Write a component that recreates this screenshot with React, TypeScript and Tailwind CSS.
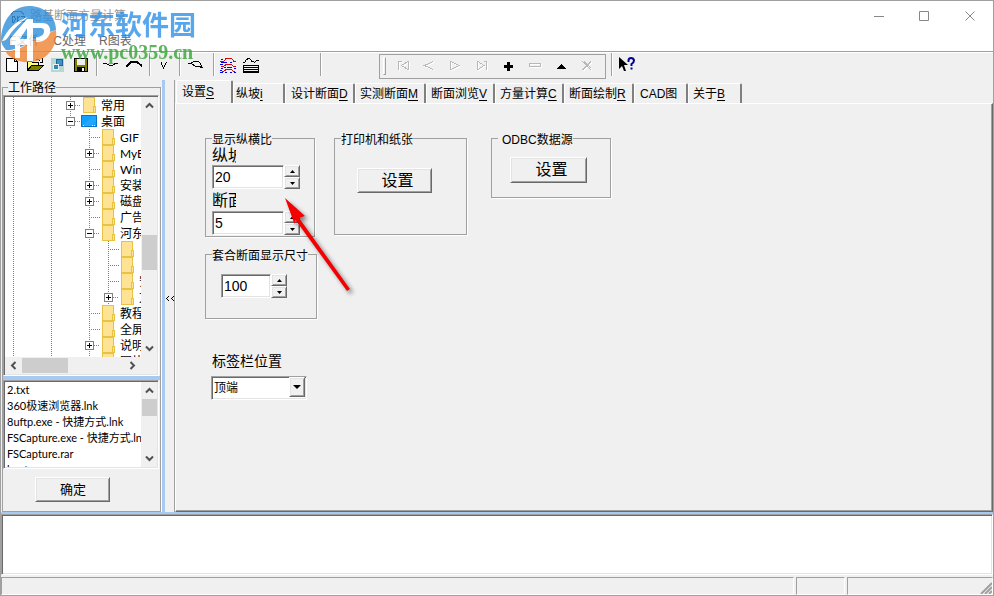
import { useState } from 'react'
import type { ReactNode } from 'react'

const SUNKEN = 'bg-white border border-t-[#a0a0a0] border-l-[#a0a0a0] border-b-white border-r-white shadow-[inset_1px_1px_0_#696969,inset_-1px_-1px_0_#e3e3e3]'
const RAISED = 'bg-[#f0f0f0] border border-t-white border-l-white border-b-[#696969] border-r-[#696969] shadow-[inset_1px_1px_0_#e3e3e3,inset_-1px_-1px_0_#a0a0a0]'
const GROUP = 'border border-[#a0a0a0] shadow-[1px_1px_0_#fff]'
const LEGEND = 'h-[14px] text-[12px] leading-[18px]'

const tabs = [
  { name: '设置', hotkey: 'S', width: 'w-[57px] pl-[5px]' },
  { name: '纵坡', hotkey: 'i', width: 'w-[52px] pl-[2px]' },
  { name: '设计断面', hotkey: 'D', width: 'w-[70px] pl-[5px]' },
  { name: '实测断面', hotkey: 'M', width: 'w-[71px] pl-1' },
  { name: '断面浏览', hotkey: 'V', width: 'w-[69px] pl-1' },
  { name: '方量计算', hotkey: 'C', width: 'w-[69px] pl-1' },
  { name: '断面绘制', hotkey: 'R', width: 'w-[70px] pl-1' },
  { name: 'CAD图', hotkey: '', width: 'w-[54px] pl-[5px]' },
  { name: '关于', hotkey: 'B', width: 'w-[54px] pl-1' },
]

// 每个字符是一格缩进: | 竖线, t 分支, + / - 展开按钮
const treeRows = [
  { cells: '| |+', label: '常用' },
  { cells: '| |-', label: '桌面', desktop: true },
  { cells: '| | t', label: 'GIF' },
  { cells: '| | +', label: 'MyE' },
  { cells: '| | t', label: 'Win' },
  { cells: '| | +', label: '安装' },
  { cells: '| | +', label: '磁盘' },
  { cells: '| | t', label: '广告' },
  { cells: '| | -', label: '河东' },
  { cells: '| | |t', label: '' },
  { cells: '| | |t', label: '' },
  { cells: '| | |t', label: '安' },
  { cells: '| | |+', label: '文' },
  { cells: '| | t', label: '教程' },
  { cells: '| | t', label: '全屏' },
  { cells: '| | +', label: '说明' },
  { cells: '| | +', label: '图片' },
]

const files = ['2.txt', '360极速浏览器.lnk', '8uftp.exe - 快捷方式.lnk', 'FSCapture.exe - 快捷方式.lnk', 'FSCapture.rar', 'host']

const navButtons = [
  { label: '首记录', d: 'M1.5 1v9M11 1.5L4.5 5.5L11 9.5M11.5 1v9M2 1.5h3', disabled: true },
  { label: '上一条', d: 'M10 1.5L1.5 5.5L10 9.5', disabled: true },
  { label: '下一条', d: 'M1.5 1v9M2 1.5L10 5.5L2 9.5', disabled: true },
  { label: '末记录', d: 'M1.5 1v9M2 1.5L8 5.5L2 9.5M10.5 1v9M8 1.5h3', disabled: true },
  { label: '添加', d: 'M4 1h3v3h3v3H7v3H4V7H1V4h3z', disabled: false },
  { label: '删除', d: 'M.5 3.5h11v3H.5z', disabled: true },
  { label: '编辑', d: 'M5 3h1v1h1v1h1v1h1v1h1v1H1V7h1V6h1V5h1V4h1z', disabled: false },
  { label: '取消', d: 'M1.5 1.5L10 10M10 1.5L1.5 10M3 1.5L10 8', disabled: true },
]

function TreeCell({ code }: { code: string }) {
  const box = code === '+' || code === '-'
  return (
    <svg width="19" height="16" className="shrink-0" shapeRendering="crispEdges" fill="none" stroke="#808080">
      {(code === '|' || code === 't' || box) && <path d="M8.5 0v16" strokeDasharray="1 1" />}
      {code === 't' && <path d="M8 8.5h11" strokeDasharray="1 1" />}
      {box && (
        <>
          <path d="M13 8.5h6" strokeDasharray="1 1" />
          <rect x="4.5" y="4.5" width="8" height="8" fill="#fff" />
          <path d="M6 8.5h5" stroke="#000" />
        </>
      )}
      {code === '+' && <path d="M8.5 6v5" stroke="#000" />}
    </svg>
  )
}

function FolderIcon() {
  return (
    <svg width="19" height="16" className="shrink-0" shapeRendering="crispEdges">
      <rect x="2" width="12" height="16" fill="#e8c341" />
      <rect x="3" y="1" width="10" height="14" fill="#ffe394" />
      <path d="M12.5 9.5h2v6h-2z" fill="#ffe394" stroke="#e8c341" />
    </svg>
  )
}

function DesktopIcon() {
  return (
    <svg width="19" height="16" className="shrink-0" shapeRendering="crispEdges">
      <rect x=".5" y="2.5" width="15" height="11" fill="#10a0ff" stroke="#0873c8" />
      <path d="M1 13L12 3h3v6l-5 4z" fill="#22a7ff" />
      <path d="M2 12.5h1M11 12.5h1M13 12.5h1" stroke="#fff" />
    </svg>
  )
}

function Chevron({ dir }: { dir: 'up' | 'down' | 'left' | 'right' }) {
  const paths = {
    up: 'M1 6.5L4.5 3L8 6.5',
    down: 'M1 2.5L4.5 6L8 2.5',
    left: 'M6.5 1L3 4.5L6.5 8',
    right: 'M2.5 1L6 4.5L2.5 8',
  }
  return (
    <svg width="9" height="9" fill="none" stroke="#505050" strokeWidth="2">
      <path d={paths[dir]} />
    </svg>
  )
}

function Separator() {
  return (
    <div className="flex h-[23px] w-[7px] shrink-0 pl-[3px]">
      <div className="w-[2px] border-l border-[#a0a0a0] bg-white" />
    </div>
  )
}

function ToolButton({ label, wide, children }: { label: string; wide?: boolean; children: ReactNode }) {
  return (
    <button aria-label={label} className={`flex h-[23px] shrink-0 items-center pl-[2px] ${wide ? 'w-[27px]' : 'w-[23px]'}`}>
      <svg width="18" height="16" fill="none" stroke="#000" shapeRendering="crispEdges">{children}</svg>
    </button>
  )
}

function Spinner({ id, initial, width }: { id: string; initial: number; width: string }) {
  const [value, setValue] = useState(initial)
  return (
    <div className="flex h-6">
      <input
        id={id}
        value={value}
        onChange={(e) => setValue(Number(e.target.value) || 0)}
        className={`${width} ${SUNKEN} rounded-none px-[2px] text-[14px] leading-5 outline-none`}
      />
      <div className="flex w-4 flex-col">
        <button aria-label="增加" onClick={() => setValue(value + 1)} className={`flex flex-1 items-center justify-center ${RAISED}`}>
          <svg width="5" height="3"><path d="M0 3L2.5 0L5 3z" /></svg>
        </button>
        <button aria-label="减少" onClick={() => setValue(value - 1)} className={`flex flex-1 items-center justify-center ${RAISED}`}>
          <svg width="5" height="3"><path d="M0 0L2.5 3L5 0z" /></svg>
        </button>
      </div>
    </div>
  )
}

function Watermark() {
  return (
    <div className="pointer-events-none absolute top-0 left-0 flex opacity-80">
      <svg width="60" height="66" viewBox="0 0 60 66" className="shrink-0">
        <path d="M0 38C1 19 12 5 28 5C43 5 55 15 55 29C48 31 38 36 30 41C21 46 10 50 5 49C2 46 0 42 0 38Z" fill="#2f8fdc" />
        <path d="M55 29C57 46 46 60 29 61C18 62 8 57 4 50C17 51 25 43 36 38C43 34 50 31 55 29Z" fill="#ee8433" />
        <path d="M1 40C6 29 14 20 27 16C20 21 11 29 8 35C6 38 4 40 1 40Z" fill="#fff" />
        <path d="M9 38L26 18H32V60H26V44H19V57H14V44H9ZM19 38H26V27Z" fill="#fff" fillRule="evenodd" />
        <path d="M32 22H41C48 22 50 27 49 32C47 38 42 41 36 41H35V36C40 36 43 34 43 30C43 27 41 27 38 27H32Z" fill="#fff" />
      </svg>
      <div className="flex flex-col pt-[9px]">
        <span className="text-[27px] leading-8 font-bold text-[#2f91e8]">河东软件园</span>
        <span className="font-['Liberation_Serif',serif] text-[20px] leading-5 font-bold text-[#36a336]">www.pc0359.cn</span>
      </div>
    </div>
  )
}

function TitleBar() {
  return (
    <header className="bg-white">
      <div className="flex h-[30px] items-center pl-[9px]">
        <svg width="16" height="16" fill="none" stroke="#222" shapeRendering="crispEdges">
          <path d="M1 7L4 3h7l3 4" stroke="#c33" />
          <path d="M2 8v6h2l1-2v-2L4 8zM7 8v6M10 8L7 11l3 3M11 8h3v2l-3 3h4" />
        </svg>
        <h1 className="ml-1 text-[12px] text-[#999]">路基断面方量计算</h1>
        <div className="ml-auto flex text-[#888]">
          <button aria-label="最小化" className="flex h-7 w-[45px] items-center justify-center">
            <svg width="11" height="11" stroke="currentColor"><path d="M0 5.5h10" /></svg>
          </button>
          <button aria-label="最大化" className="flex h-7 w-[45px] items-center justify-center">
            <svg width="11" height="11" fill="none" stroke="currentColor"><path d="M.5.5h9v9h-9z" /></svg>
          </button>
          <button aria-label="关闭" className="flex h-7 w-[46px] items-center justify-center">
            <svg width="11" height="11" stroke="currentColor"><path d="M.5.5l9 9M9.5.5l-9 9" /></svg>
          </button>
        </div>
      </div>
      <nav className="flex h-[20px] gap-[13px] pl-2 text-[12px] leading-5 text-[#666]">
        <button>F文件</button>
        <button>C处理</button>
        <button>R图表</button>
      </nav>
    </header>
  )
}

function Toolbar() {
  return (
    <div className="flex h-[29px] shrink-0 items-center border-t border-[#a0a0a0] pb-[3px] shadow-[inset_0_1px_0_#fff]">
      <ToolButton label="新建"><path d="M3.5 1.5h8l3 3v10h-11zM11.5 1.5v3h3" fill="#fff" /></ToolButton>
      <ToolButton label="打开">
        <path d="M1.5 13.5v-9h4l1 1h6v3h-6z" fill="#ffff70" />
        <path d="M1.5 13.5l4-5h12l-5 5z" fill="#808000" />
        <path d="M10 2.5h2l2 1M16.5 1v4h-3" />
      </ToolButton>
      <ToolButton label="窗口">
        <path d="M2 1h13v14H2z" fill="#b5d8d0" stroke="none" />
        <path d="M7.5 2.5h6v6h-6z" fill="#3c94cd" stroke="#1b659c" />
        <path d="M4.5 7.5h5v5h-5z" fill="#3587ae" stroke="#eef" />
      </ToolButton>
      <ToolButton label="保存">
        <path d="M2.5 1.5h13v13h-13z" fill="#808000" />
        <path d="M5 2h8v6H5z" fill="#eee" stroke="none" />
        <path d="M5 10h8v5H5z" fill="#000" stroke="none" />
        <path d="M10 11h2v3h-2z" fill="#fff" stroke="none" />
      </ToolButton>
      <Separator />
      <ToolButton label="凹曲线"><path d="M1 6.5h4M5 7.5h2M7 8.5h4M11 7.5h2M12 6.5h4" /></ToolButton>
      <ToolButton label="凸曲线"><path d="M1 10l2-2l3-3h6l5 4" strokeWidth="2" /></ToolButton>
      <Separator />
      <ToolButton label="纵坡"><path d="M6.5 5v3M7.5 8v2M8.5 10v2M9.5 8v2M10.5 6v2M11 5.5h1" /></ToolButton>
      <Separator />
      <ToolButton label="断面" wide><path d="M3 6.5h3M6 5.5h2M8 4.5h6M14 5.5h1M15.5 6v2M5 6.5h2M7 7.5h2M8 8.5h2M10 9.5h7M15 10.5h3M16.5 8v2" /></ToolButton>
      <Separator />
      <ToolButton label="多断面">
        <path d="M1 4.5h4M5 3.5h1M6 2.5h1M6 1.5h7M13 2.5h1M14 3.5h1M14 4.5h3M2 9.5h3M5 8.5h2M6 7.5h7M13 8.5h1M14 9.5h3M3 14.5h2M5 13.5h2M6 12.5h7M13 13.5h1M14 14.5h2" stroke="#e00000" />
        <path d="M2 2.5h2M2 5.5h6M11 5.5h2M1 7.5h3M5 10.5h2M8 10.5h5M2 11.5h2M1 13.5h2M15 11.5h2M1 15.5h3M6 15.5h2M11 15.5h2M15 15.5h2" stroke="#0000e0" />
      </ToolButton>
      <ToolButton label="表格">
        <path d="M1 5.5h2M3 4.5h1M3 3.5h1M4 2.5h2M5 1.5h3M8 2.5h1M9 3.5h1M9 4.5h3M12 5.5h1M13 4.5h1M14 3.5h3" />
        <path d="M1.5 8.5h15v7h-15zM1 10.5h15M1 12.5h15M1 14.5h15" />
      </ToolButton>
      <div className="w-[54px]" />
      <Separator />
      <div className="mt-[3px] ml-[55px] flex h-[25px] w-[227px] items-center border border-[#a0a0a0] pl-[3px]">
        <div className="h-[18px] w-[3px] border border-t-white border-l-white border-b-[#a0a0a0] border-r-[#a0a0a0]" />
        <div className="ml-1 flex flex-1 justify-between pr-1">
          {navButtons.map((b) => (
            <button key={b.label} aria-label={b.label} disabled={b.disabled} className="flex h-5 w-[26px] items-center justify-center">
              {b.disabled ? (
                <svg width="13" height="12" fill="none" shapeRendering="crispEdges">
                  <path d={b.d} stroke="#fff" transform="translate(1 1)" />
                  <path d={b.d} stroke="#b8b8b8" />
                </svg>
              ) : (
                <svg width="11" height="11" shapeRendering="crispEdges"><path d={b.d} /></svg>
              )}
            </button>
          ))}
        </div>
      </div>
      <div className="w-[2px]" />
      <Separator />
      <button aria-label="帮助" className="flex h-[23px] w-[24px] items-center justify-center">
        <svg width="18" height="16">
          <path d="M1 0v12l3-3l2 5h2L6 8h4z" />
          <path d="M10.5 5V3.5Q10.5 1 13 1T16 3.5Q16 5.5 13.5 7V9" fill="none" stroke="#000090" strokeWidth="2" />
          <path d="M12.5 10.5h2v2h-2z" fill="#000090" />
        </svg>
      </button>
    </div>
  )
}

function VerticalScroll({ children }: { children: ReactNode }) {
  return (
    <div className="flex w-4 shrink-0 flex-col items-center bg-[#f0f0f0]">
      <div className="flex h-[17px] shrink-0 items-center"><Chevron dir="up" /></div>
      <div className="w-[15px] flex-1 overflow-hidden">{children}</div>
      <div className="flex h-[17px] shrink-0 items-center"><Chevron dir="down" /></div>
    </div>
  )
}

function PathPanel() {
  return (
    <fieldset className="ml-px flex w-[159px] min-w-0 shrink-0 flex-col border border-[#a0a0a0] bg-[#f0f0f0] shadow-[1px_1px_0_#fff]">
      <legend className="ml-[5px] h-[14px] text-[12px] leading-4">工作路径</legend>
      <div className="flex h-full flex-col pt-px">
        <div className={`mr-px flex min-h-0 flex-1 flex-col p-px ${SUNKEN}`}>
          <div className="flex min-h-0 flex-1">
            <ul className="h-0 min-h-full min-w-0 flex-1 overflow-hidden font-['Lato','Noto_Sans_CJK_SC',sans-serif]">
              {treeRows.map((row, i) => (
                <li key={i} className="flex h-4 items-start">
                  {row.cells.split('').map((code, n) => <TreeCell key={n} code={code} />)}
                  {row.desktop ? <DesktopIcon /> : <FolderIcon />}
                  <span className="ml-px h-4 text-[12px] leading-[18px] whitespace-nowrap">{row.label}</span>
                </li>
              ))}
            </ul>
            <VerticalScroll>
              <div className="mt-[121px] h-[35px] bg-[#cdcdcd]" />
            </VerticalScroll>
          </div>
          <div className="flex h-[17px] shrink-0 items-center bg-[#f0f0f0] pr-4">
            <div className="flex w-[17px] justify-center"><Chevron dir="left" /></div>
            <div className="h-[15px] flex-1"><div className="h-full w-[46px] bg-[#cdcdcd]" /></div>
            <div className="flex w-[17px] justify-center"><Chevron dir="right" /></div>
          </div>
        </div>
        <div className="h-1 shrink-0 bg-[#a6caf0]" />
        <div className={`mr-px flex h-[89px] shrink-0 p-px ${SUNKEN}`}>
          <ul className="min-w-0 flex-1 overflow-hidden pl-[2px] font-['Lato','Noto_Sans_CJK_SC',sans-serif] text-[11px] leading-4">
            {files.map((f) => <li key={f} className="h-4 whitespace-nowrap">{f}</li>)}
          </ul>
          <VerticalScroll>
            <div className="h-[17px] bg-[#cdcdcd]" />
          </VerticalScroll>
        </div>
        <div className="flex h-[42px] shrink-0 items-start pt-2 pl-8">
          <button className={`h-[25px] w-[75px] pl-px text-[13px] leading-5 ${RAISED}`}>确定</button>
        </div>
      </div>
    </fieldset>
  )
}

function SettingsPage() {
  return (
    <div className="flex items-start pt-[27px] pl-[29px]">
      <div className="flex w-[112px] flex-col">
        <fieldset className={`w-[110px] min-w-0 pb-px pl-[6px] ${GROUP}`}>
          <legend className={LEGEND}>显示纵横比</legend>
          <label htmlFor="slope" className="block h-5 w-6 overflow-hidden text-[16px] leading-[22px] whitespace-nowrap">纵坡</label>
          <Spinner id="slope" initial={20} width="w-[72px]" />
          <label htmlFor="section" className="block h-[22px] w-6 overflow-hidden text-[16px] leading-6 whitespace-nowrap">断面</label>
          <Spinner id="section" initial={5} width="w-[72px]" />
        </fieldset>
        <fieldset className={`mt-[10px] min-w-0 pt-[13px] pb-5 pl-[6px] ${GROUP}`}>
          <legend className={LEGEND}><label htmlFor="size">套合断面显示尺寸</label></legend>
          <div className="pl-[9px]"><Spinner id="size" initial={100} width="w-[50px]" /></div>
        </fieldset>
        <label htmlFor="position" className="mt-8 pl-[7px] text-[14px] leading-5 whitespace-nowrap">标签栏位置</label>
        <div className="relative mt-1 ml-[6px] w-24">
          <select id="position" className={`h-6 w-full appearance-none rounded-none pt-px pl-[2px] text-[12px] ${SUNKEN}`}>
            <option>顶端</option>
            <option>底端</option>
          </select>
          <span className={`pointer-events-none absolute top-[2px] right-[2px] flex h-5 w-4 items-center justify-center ${RAISED}`}>
            <svg width="8" height="4"><path d="M0 0h8L4 4z" /></svg>
          </span>
        </div>
      </div>
      <fieldset className={`ml-[17px] w-[133px] min-w-0 pt-[23px] pb-[41px] pl-[6px] ${GROUP}`}>
        <legend className={LEGEND}>打印机和纸张</legend>
        <button className={`ml-4 block h-[25px] w-[75px] pl-[6px] text-[16px] leading-5 ${RAISED}`}>设置</button>
      </fieldset>
      <fieldset className={`ml-6 w-[120px] min-w-0 pt-3 pb-[14px] pl-[6px] ${GROUP}`}>
        <legend className={`pl-1 ${LEGEND}`}>ODBC数据源</legend>
        <button className={`ml-3 block h-[26px] w-[77px] pl-[6px] text-[16px] leading-5 ${RAISED}`}>设置</button>
      </fieldset>
    </div>
  )
}

function PointerArrow() {
  return (
    <svg width="90" height="110" className="pointer-events-none absolute top-[190px] left-[275px]">
      <g className="drop-shadow-[3px_3px_2px_rgba(0,0,0,0.45)]">
        <path d="M9 7L29 25L23 27L74 98L71 100L19.5 29L18.5 33Z" fill="#f40000" />
      </g>
    </svg>
  )
}

export default function App() {
  const [active, setActive] = useState(0)

  return (
    <div className="relative flex h-screen flex-col overflow-hidden border border-[#a0a0a0] bg-[#f0f0f0] font-['Liberation_Sans','Noto_Sans_CJK_SC',sans-serif] text-black">
      <TitleBar />
      <Toolbar />

      <main className="flex min-h-0 flex-1">
        <PathPanel />
        <div className="ml-px w-[3px] shrink-0 bg-[#a6caf0]" />
        <button aria-label="收起" className="flex w-[10px] shrink-0 items-center justify-center border-r border-[#a0a0a0] pt-1">
          <svg width="9" height="7" fill="none" stroke="#000" shapeRendering="crispEdges">
            <path d="M3 1.5h1M2 2.5h1M1 3.5h1M2 4.5h1M3 5.5h1M8 1.5h1M7 2.5h1M6 3.5h1M7 4.5h1M8 5.5h1" />
          </svg>
        </button>
        <div className="flex min-w-0 flex-1 flex-col">
          <div role="tablist" className="flex h-[23px] items-end pl-px">
            {tabs.map((tab, i) => (
              <button
                key={tab.name}
                role="tab"
                aria-selected={i === active}
                onClick={() => setActive(i)}
                className={`${tab.width} shrink-0 rounded-t-[2px] border-t border-r-2 border-l border-t-white border-r-[#808080] border-l-white text-left text-[12px] whitespace-nowrap ${i === active ? 'h-[23px] leading-[22px]' : 'h-5 leading-[20px]'}`}
              >
                {tab.name}<span className="underline underline-offset-2">{tab.hotkey}</span>
              </button>
            ))}
          </div>
          <div role="tabpanel" className="flex-1 border border-t-white border-l-white border-b-[#696969] border-r-[#696969] shadow-[inset_-1px_-1px_0_#a0a0a0]">
            <SettingsPage />
          </div>
        </div>
      </main>

      <div className="h-[2px] shrink-0 bg-[#a6caf0]" />
      <textarea aria-label="输出" className={`block h-[61px] w-full shrink-0 resize-none rounded-none outline-none ${SUNKEN}`} />
      <footer className="mt-[2px] flex h-[18px] shrink-0 gap-[2px]">
        <div className="flex-1 border border-t-[#a0a0a0] border-l-[#a0a0a0] border-b-white border-r-white" />
        <div className="w-[49px] border border-t-[#a0a0a0] border-l-[#a0a0a0] border-b-white border-r-white" />
        <div className="flex w-[146px] items-end justify-end border border-t-[#a0a0a0] border-l-[#a0a0a0] border-b-white border-r-white">
          <svg width="12" height="12" stroke="#a0a0a0" strokeWidth="2"><path d="M1 12L12 1M5 12L12 5M9 12L12 9" /></svg>
        </div>
      </footer>

      <PointerArrow />
      <Watermark />
    </div>
  )
}
